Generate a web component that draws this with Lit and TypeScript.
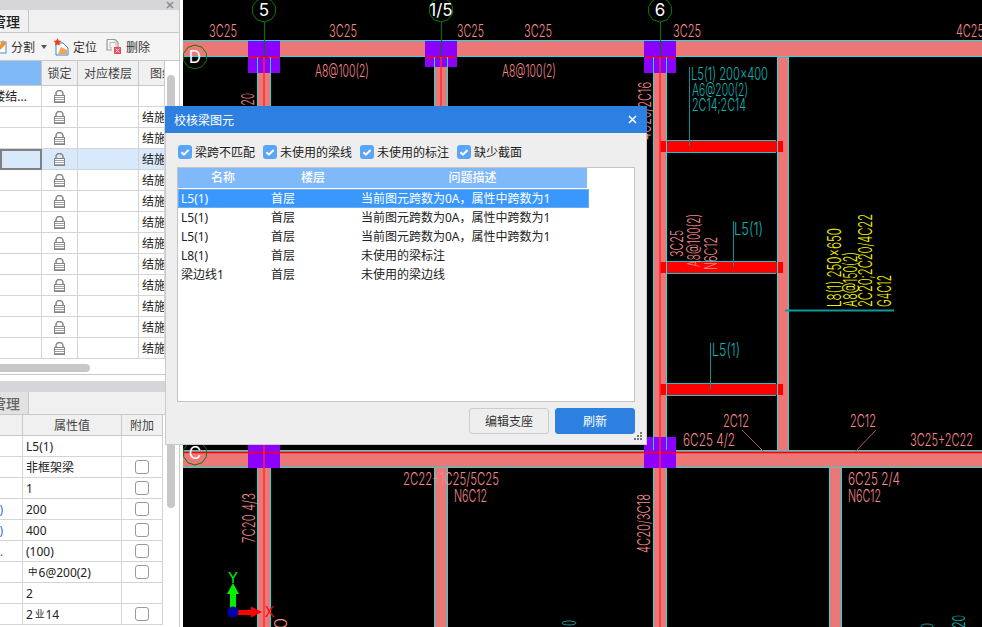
import { LitElement, html, css, svg } from "lit";
import { customElement } from "lit/decorators.js";

type T = [string, number, number, number, string, boolean?];
// text, x (start), baseline, length, colour class, rotated
const LABELS: T[] = [
  ["3C25", 209, 37, 28, "pink"], ["3C25", 329, 37, 28, "pink"], ["3C25", 457, 37, 27, "pink"],
  ["3C25", 524, 37, 28, "pink"], ["3C25", 673, 37, 28, "pink"], ["4C25", 956, 37, 28, "pink"],
  ["A8@100(2)", 315, 77, 54, "pink"], ["A8@100(2)", 502, 77, 54, "pink"],
  ["L5(1) 200x400", 691, 80, 77, "teal"], ["A6@200(2)", 692, 96, 56, "teal"], ["2C14;2C14", 692, 111, 54, "teal"],
  ["L5(1)", 734, 235, 29, "teal"], ["L5(1)", 712, 356, 28, "teal"],
  ["2C12", 723, 427, 26, "pink"], ["2C12", 850, 427, 26, "pink"],
  ["6C25 4/2", 683, 446, 52, "pink"], ["3C25+2C22", 910, 446, 63, "pink"],
  ["6C25 2/4", 848, 485, 52, "pink"], ["N6C12", 848, 502, 33, "pink"],
  ["2C22+1C25/5C25", 403, 485, 96, "pink"], ["N6C12", 454, 502, 33, "pink"],
  ["3C20", 254, 119, 26, "pink", true], ["4C20/2C16", 651, 140, 58, "pink", true],
  ["3C25", 683, 257, 27, "pink", true], ["A8@100(2)", 700, 267, 53, "pink", true], ["N6C12", 717, 270, 33, "pink", true],
  ["L8(1) 250x650", 841, 307, 79, "yellow", true], ["A8@150(2)", 857, 307, 55, "yellow", true],
  ["2C20;2C20/4C22", 872, 307, 93, "yellow", true], ["G4C12", 891, 307, 32, "yellow", true],
  ["7C20 4/3", 255, 543, 50, "pink", true], ["4C20/3C18", 650, 553, 59, "pink", true],
  ["20", 287, 640, 22, "pink", true], ["20", 965, 628, 13, "teal", true],
];

const COLUMN_X = [[257, 271, 57, 106], [434, 448, 57, 106], [653, 667, 57, 450], [777, 789, 57, 450],
  [257, 271, 468, 627], [434, 448, 468, 627], [653, 667, 468, 627], [829, 842, 468, 627]];
const NODES = [[248, 41, 73], [425, 41, 67], [644, 41, 73], [248, 445, 468], [644, 437, 468]];
const RED_Y = [141, 262, 384];
const BUBBLES: [string, number, number][] = [["5", 264, 10], ["1/5", 441, 10], ["6", 660, 10], ["D", 195, 57], ["C", 195, 453]];

const octagon = (cx: number, cy: number, r: number) =>
  Array.from({ length: 10 }, (_, i) => {
    const a = (Math.PI / 5) * i + Math.PI / 10;
    return `${(cx + r * Math.cos(a)).toFixed(1)},${(cy + r * Math.sin(a)).toFixed(1)}`;
  }).join(" ");

const lock = html`<svg class="lock" width="11" height="13" viewBox="0 0 11 13">
  <path d="M2 6V3.7a3.5 3.2 0 0 1 7 0V6" fill="none" stroke="#858585" stroke-width="1.5"/>
  <rect x="0.5" y="5.5" width="10" height="7" fill="#fff" stroke="#858585"/>
  <path d="M1 7.5h9M1 9.5h9M1 11.5h9" stroke="#a0a0a0"/>
</svg>`;

const check = html`<svg class="check" width="14" height="14" viewBox="0 0 14 14">
  <rect width="14" height="14" rx="3" fill="#5aa5f9"/>
  <path d="M3.4 7.2l2.5 2.4 4.7-4.6" fill="none" stroke="#fff" stroke-width="2"/>
</svg>`;

const TOP_ROWS = 13;
const sym = (c: string) => html`<span class="sym">${c}</span>`;
const PROPS: [string, unknown, boolean][] = [
  ["", "L5(1)", false], ["", "非框架梁", true], ["", "1", true], [")", "200", true], [")", "400", true],
  ["...", "(100)", true], ["", html`${sym("中")}6@200(2)`, true], ["", "2", false], ["", html`2${sym("业")}14`, true],
];
const ISSUES = [
  ["L5(1)", "首层", "当前图元跨数为0A，属性中跨数为1"],
  ["L5(1)", "首层", "当前图元跨数为0A，属性中跨数为1"],
  ["L5(1)", "首层", "当前图元跨数为0A，属性中跨数为1"],
  ["L8(1)", "首层", "未使用的梁标注"],
  ["梁边线1", "首层", "未使用的梁边线"],
];
const FILTERS = ["梁跨不匹配", "未使用的梁线", "未使用的标注", "缺少截面"];

@customElement("app-root")
export class AppRoot extends LitElement {
  static styles = css`
    :host { display: block; width: 982px; height: 627px; overflow: hidden; position: relative;
      font-family: "Noto Sans", "Noto Sans CJK SC", sans-serif; font-size: 12px; color: #222; }
    .app { display: grid; grid-template-columns: 183px 1fr; width: 982px; height: 627px; background: #fff; }
    .side { width: 179px; height: 627px; border-right: 1px solid #c8c8c8; overflow: hidden;
      display: flex; flex-direction: column; background: #fff; }
    .cad { display: block; background: #000; }
    .cad text { font-family: Inter, "Liberation Sans", sans-serif; font-weight: 300; font-size: 17.5px; }
    .pink { fill: #f58a8a; } .teal { fill: #14b4b4; } .white { fill: #fff; }
    .cad text.yellow { fill: #f5f500; font-size: 19px; }
    .cad text.bubble { font-size: 17px; font-weight: 400; text-anchor: middle; }
    .cad text.axis { font-size: 15px; font-weight: 400; }
    .titlebar { height: 10px; flex: none; background: #d4d6da; display: flex; justify-content: flex-end; align-items: center; padding-right: 5px; }
    .tabs { height: 22px; flex: none; background: #f0f0f0; border-bottom: 1px solid #c8c8c8; display: flex; }
    .tab { width: 29px; display: flex; align-items: center; justify-content: flex-end; font-size: 14px; font-weight: 500; color: #222; border-right: 1px solid #c8c8c8; overflow: hidden; white-space: nowrap; padding-right: 8px; box-sizing: border-box; }
    .tabs.low .tab { background: #e2e2e2; color: #666; }
    .toolbar { height: 28px; flex: none; background: #f4f4f4; border-bottom: 1px solid #c8c8c8; display: flex; align-items: center; font-size: 12px; color: #333; box-sizing: border-box; }
    .tool { display: flex; align-items: center; gap: 4px; white-space: nowrap; }
    .caret { width: 0; height: 0; border: 3px solid transparent; border-top: 4px solid #555; border-bottom: 0; margin: 0 6px 0 2px; }
    .tool.first { margin-left: -8px; }
    .tool.del { margin-left: 9px; }
    .body { display: flex; flex: none; }
    .grid { display: grid; width: 165px; overflow: hidden; }
    .top { grid-template-columns: 42px 36px 61px 26px; grid-auto-rows: 21px; grid-template-rows: 25px; }
    .scroll { width: 14px; position: relative; }
    .thumb { position: absolute; left: 2px; width: 8px; border-radius: 4px; background: #c8c8c8; }
    .cell { border-right: 1px solid #d4d4d4; border-bottom: 1px solid #d4d4d4; display: flex; align-items: center; justify-content: center; overflow: hidden; white-space: nowrap; box-sizing: border-box; }
    .cell.head { background: #f0f0f0; color: #444; border-color: #c8c8c8; }
    .cell.active { background: #7fb9f7; }
    .cell.right { justify-content: flex-end; padding-right: 14px; }
    .cell.tail { justify-content: flex-end; padding-right: 19px; color: #2a6fd6; }
    .cell.left { justify-content: flex-start; padding-left: 3px; }
    .cell.drawing-head { justify-content: flex-start; padding-left: 11px; }
    .cell.sel { background: #d7e9fb; }
    .cell.focus { border: 2px solid #808080; }
    .lock { display: block; }
    .hbar { height: 16px; flex: none; border-bottom: 1px solid #c8c8c8; position: relative; box-sizing: border-box; margin-bottom: 6px; }
    .hthumb { position: absolute; top: 5px; left: 0; width: 90px; height: 8px; border-radius: 0 4px 4px 0; background: #c8c8c8; }
    .greybar { height: 11px; flex: none; background: #d4d6da; }
    .low-grid { grid-template-columns: 23px 99px 41px; grid-auto-rows: 21px; width: 163px; }
    .sym { font-size: 9.5px; position: relative; top: -2px; margin: 0 1px 0 2px; }
    .box { width: 12px; height: 12px; border: 1px solid #999; border-radius: 3px; background: #fff; }
    .low-scroll { margin-left: 2px; }
    .dialog { position: absolute; left: 165px; top: 106px; width: 482px; height: 339px; box-sizing: border-box; background: #eee;
      border: 1px solid #c6cad2; border-top: 0; display: flex; flex-direction: column; }
    .dlg-title { height: 27px; margin: 0 -1px; flex: none; background: #2e80e0; color: #fff; display: flex; align-items: center; justify-content: space-between; padding: 0 10px 0 9px; }
    .filters { display: flex; gap: 8px; height: 34px; box-sizing: border-box; padding: 4px 0 0 12px; flex: none; align-items: center; }
    .filter { display: flex; gap: 3px; align-items: center; }
    .check { display: block; }
    .listbox { margin-left: 11px; width: 458px; height: 235px; box-sizing: border-box; border: 1px solid #c4c4c4; background: #fff; flex: none; overflow: hidden; }
    .list-head { display: grid; grid-template-columns: 90px 90px 229px; width: 409px; height: 20px; margin-bottom: 1px; background: #7fb9f9; color: #fff; text-align: center; line-height: 20px; font-weight: 500; }
    .row { display: grid; grid-template-columns: 90px 90px auto; width: 411px; height: 19px; line-height: 19px; padding-left: 3px; box-sizing: border-box; white-space: nowrap; }
    .row.on { background: #3a97fe; color: #fff; box-shadow: inset 0 0 0 1px #6aaeee; }
    .actions { display: flex; justify-content: flex-end; gap: 6px; padding: 6px 11px 0 0; }
    .btn { width: 80px; height: 26px; box-sizing: border-box; border-radius: 3px; border: 1px solid #c8ccd4; background: #eee; color: #333; display: flex; align-items: center; justify-content: center; }
    .btn.primary { background: #2e80e0; border-color: #2e80e0; color: #fff; }
    .grip { position: absolute; right: 3px; bottom: 3px; display: block; }
  `;

  private cad() {
    return html`<svg class="cad" width="799" height="627" viewBox="183 0 799 627">
      ${svg`
      <rect x="183" y="40" width="799" height="17" fill="#ec7777"/>
      <rect x="183" y="450" width="799" height="18" fill="#ec7777"/>
      ${COLUMN_X.map(([a, b, t, e]) => svg`<rect x=${a} y=${t} width=${b - a} height=${e - t} fill="#ec7777"/>`)}
      ${RED_Y.map((y) => svg`<rect x="660" y=${y} width="123" height="11" fill="#ff0000"/>`)}
      <path d="M183 40.5H982M183 56.5H982M183 450.5H982M183 467.5H982" stroke="#19e0e0" fill="none"/>
      ${NODES.map(([x, t, e]) => svg`<rect x=${x} y=${t} width="32" height=${e - t} fill="#8b00ff"/>`)}
      <path d="M248 57.5H280M425 57.5H457M644 57.5H676M183 452.5H982" stroke="#ff0000" fill="none" stroke-width="1.4"/>
      ${COLUMN_X.map(([a, b, t, e]) => svg`<path d="M${a + 0.5} ${t}V${e}M${b - 0.5} ${t}V${e}" stroke="#19e0e0" fill="none"/>`)}
      <path d="M264 57V106M441 57V106M660 57V627M264 445V627" stroke="#ff2a2a" stroke-width="1.4" fill="none"/>
      ${RED_Y.map((y) => svg`<path d="M667 ${y - 0.5}H776M667 ${y + 11.5}H776" stroke="#19c8c8" fill="none"/>`)}
      <path d="M689.5 67V146M733.5 221V267M710.5 343V389" stroke="#0f8f8f" fill="none"/>
      <path d="M785 310.5H894" stroke="#0f9a9a" stroke-width="2" fill="none"/>
      <path d="M742 430L764 452M876 430L855 452" stroke="#a85a5a" fill="none"/>
      <path d="M264.5 22V57M441.5 22V57M660.5 22V57" stroke="#0b6a0b" stroke-width="1.2" fill="none"/>
      ${BUBBLES.map(([t, x, y]) => svg`
        <polygon points=${octagon(x, y, 12)} fill="none" stroke="#0a7a0a"/>
        <text class="bubble white" x=${x} y=${y + 6}>${t}</text>`)}
      ${LABELS.map(([t, x, y, len, cls, rot]) => svg`
        <text class=${cls} x=${x} y=${y} textLength=${len} lengthAdjust="spacingAndGlyphs"
          transform=${rot ? `rotate(-90 ${x} ${y})` : ""}>${t}</text>`)}
      <ellipse cx="569" cy="623" rx="7" ry="2" fill="none" stroke="#0f9a9a"/>
      <ellipse cx="927" cy="626" rx="6" ry="2" fill="none" stroke="#0f9a9a"/>
      <path d="M233 583L239 594H236V608H230V594H227Z" fill="#00ee00"/>
      <text class="axis" fill="#00ee00" x="228" y="583" textLength="10" lengthAdjust="spacingAndGlyphs">Y</text>
      <rect x="238" y="610" width="14" height="5" fill="#ff0000"/>
      <path d="M251 606.5L262 612L251 617.5Z" fill="#ff0000"/>
      <circle cx="233" cy="612" r="5.5" fill="#0000a8"/>
      <text class="axis" fill="#ff0000" x="265" y="617" textLength="9" lengthAdjust="spacingAndGlyphs">X</text>
      `}
    </svg>`;
  }

  private topTable() {
    const rows = Array.from({ length: TOP_ROWS }, (_, i) => i);
    return html`<div class="grid top">
      <div class="cell head active"></div>
      <div class="cell head">锁定</div>
      <div class="cell head">对应楼层</div>
      <div class="cell head drawing-head">图纸</div>
      ${rows.map((i) => {
        const sel = i === 3 ? "sel" : "";
        return html`
          <div class="cell right ${sel} ${i === 3 ? "focus" : ""}">${i === 0 ? "楼结..." : ""}</div>
          <div class="cell ${sel}">${lock}</div>
          <div class="cell ${sel}"></div>
          <div class="cell left ${sel}">${i === 0 ? "" : "结施"}</div>`;
      })}
    </div>`;
  }

  private propTable() {
    return html`<div class="grid low-grid">
      <div class="cell head"></div><div class="cell head">属性值</div><div class="cell head">附加</div>
      ${PROPS.map(([a, b, c]) => html`
        <div class="cell tail">${a}</div>
        <div class="cell left"><span>${b}</span></div>
        <div class="cell">${c ? html`<span class="box"></span>` : ""}</div>`)}
    </div>`;
  }

  render() {
    return html`
      <div class="app">
        <div class="side">
          <div class="titlebar">
            <svg width="8" height="8" viewBox="0 0 8 8"><path d="M1 1l6 6M7 1L1 7" stroke="#8a8a8a" stroke-width="1.6"/></svg>
          </div>
          <div class="tabs"><div class="tab">管理</div></div>
          <div class="toolbar">
            <div class="tool first">
              <svg width="15" height="15" viewBox="0 0 15 15"><rect x="2" y="3" width="12" height="11" fill="#fff" stroke="#4a8fd0"/><path d="M11 1l3 4-6 6-3 1 1-3z" fill="#f09030"/></svg>
              <span>分割</span><i class="caret"></i>
            </div>
            <div class="tool">
              <svg width="16" height="18" viewBox="0 0 16 18"><path d="M3 5h7l5 5v7H3z" fill="#fff" stroke="#3d82c4"/><path d="M5 16l3-7 6 3v4z" fill="#f3a45a"/><path d="M4.5 0l1.2 2.6L8.5 3 6.4 5l.5 2.8-2.4-1.4L2 7.8 2.6 5 .5 3l2.8-.4z" fill="#e8421c"/></svg>
              <span>定位</span>
            </div>
            <div class="tool del">
              <svg width="16" height="15" viewBox="0 0 16 15"><path d="M1 .5h8l3 3V9M1 .5V11h5" fill="none" stroke="#9a9a9a" stroke-width="1.2"/><path d="M4 3.5h6V8M4 3.5V9h2" fill="none" stroke="#bbb"/><rect x="8" y="8" width="7" height="7" fill="#e8485a"/><path d="M9.5 9.5l4 4M13.5 9.5l-4 4" stroke="#fff"/></svg>
              <span>删除</span>
            </div>
          </div>
          <div class="body">
            ${this.topTable()}
            <div class="scroll"><div class="thumb" style="top:14px;height:140px"></div></div>
          </div>
          <div class="hbar"><div class="hthumb"></div></div>
          <div class="greybar"></div>
          <div class="tabs low"><div class="tab">管理</div></div>
          <div class="body">
            ${this.propTable()}
            <div class="scroll low-scroll"><div class="thumb" style="top:-40px;height:133px"></div></div>
          </div>
        </div>
        ${this.cad()}
      </div>
      <div class="dialog">
        <div class="dlg-title">
          <span>校核梁图元</span>
          <svg width="9" height="9" viewBox="0 0 9 9"><path d="M1 1l7 7M8 1L1 8" stroke="#fff" stroke-width="1.5"/></svg>
        </div>
        <div class="filters">
          ${FILTERS.map((f) => html`<label class="filter">${check}<span>${f}</span></label>`)}
        </div>
        <div class="listbox">
          <div class="list-head"><span>名称</span><span>楼层</span><span>问题描述</span></div>
          ${ISSUES.map((r, i) => html`<div class="row ${i === 0 ? "on" : ""}"><span>${r[0]}</span><span>${r[1]}</span><span>${r[2]}</span></div>`)}
        </div>
        <div class="actions">
          <div class="btn">编辑支座</div>
          <div class="btn primary">刷新</div>
        </div>
        <svg class="grip" width="9" height="9" viewBox="0 0 9 9"><path d="M6 0h2v2H6zM3 3h2v2H3zM6 3h2v2H6zM0 6h2v2H0zM3 6h2v2H3zM6 6h2v2H6z" fill="#777"/></svg>
      </div>
    `;
  }
}
